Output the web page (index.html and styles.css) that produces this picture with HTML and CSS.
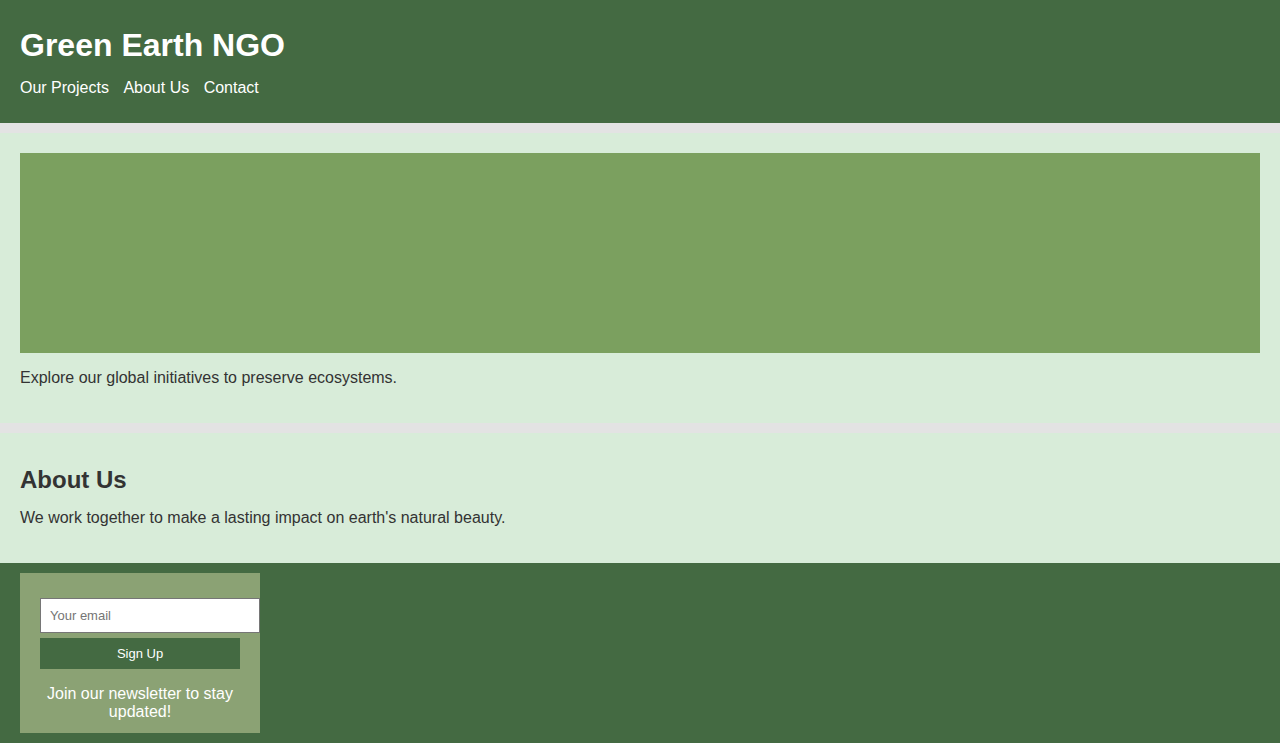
FILE: index.html
```html
<!DOCTYPE html>
<html lang="en">
<head>
<meta charset="utf-8">
<title>Green Earth NGO</title>
<link rel="stylesheet" href="styles.css">
</head>
<body>
<header class="site-header">
  <h1 class="site-title">Green Earth NGO</h1>
  <nav class="site-nav">
    <a href="#projects">Our Projects</a>
    <a href="#about">About Us</a>
    <a href="#contact">Contact</a>
  </nav>
</header>
<main>
  <section class="panel" id="projects">
    <div class="hero"></div>
    <p class="text">Explore our global initiatives to preserve ecosystems.</p>
  </section>
  <section class="panel panel-about" id="about">
    <h2 class="panel-title">About Us</h2>
    <p class="text">We work together to make a lasting impact on earth's natural beauty.</p>
  </section>
</main>
<footer class="site-footer" id="contact">
  <div class="newsletter">
    <form class="newsletter-form">
      <input class="email" type="email" placeholder="Your email">
      <button class="signup" type="button">Sign Up</button>
    </form>
    <p class="newsletter-text">Join our newsletter to stay updated!</p>
  </div>
</footer>
</body>
</html>
```
FILE: styles.css
```css
html, body {
  margin: 0;
  padding: 0;
}
body {
  background: #e3e3e3;
  font-family: "Liberation Sans", Arial, sans-serif;
  color: #333333;
}
.site-header {
  background: #446a42;
  color: #ffffff;
  padding: 27px 20px 26px;
}
.site-title {
  margin: 0 0 15px;
  font-size: 32px;
  font-weight: bold;
  line-height: 37px;
}
.site-nav a {
  color: #ffffff;
  text-decoration: none;
  margin-right: 10px;
  font-size: 16px;
}
.panel {
  background: #d8ecd9;
  padding: 20px;
  margin-top: 10px;
}
.panel-about {
  padding-bottom: 20px;
}
.hero {
  height: 200px;
  background: #7ba05f;
}
.text {
  margin: 16px 0;
  font-size: 16px;
}
.panel-about .text {
  margin: 15px 0 0;
  padding-bottom: 16px;
}
.panel-title {
  margin: 13px 0 0;
  font-size: 24px;
  line-height: 27.6px;
}
.site-footer {
  background: #446a42;
  padding: 10px 20px;
}
.newsletter {
  width: 200px;
  background: #8ba274;
  padding: 20px 20px 12px;
  text-align: center;
}
.newsletter-form {
  display: flex;
  flex-direction: column;
  align-items: flex-start;
}
.email {
  box-sizing: content-box;
  width: 200px;
  margin-top: 5px;
  padding: 9px 9px;
  font-family: "Liberation Sans", Arial, sans-serif;
  font-size: 13px;
  line-height: 15px;
  border: 1px solid #767676;
  border-radius: 0;
  background: #ffffff;
}
.email::placeholder {
  color: #757575;
}
.signup {
  width: 200px;
  margin-top: 5px;
  padding: 8px;
  border: none;
  background: #446a42;
  color: #ffffff;
  font-family: "Liberation Sans", Arial, sans-serif;
  font-size: 13px;
  line-height: 15px;
}
.newsletter-text {
  margin: 16px 0 0;
  color: #ffffff;
  font-size: 16px;
  line-height: 18px;
}
```
